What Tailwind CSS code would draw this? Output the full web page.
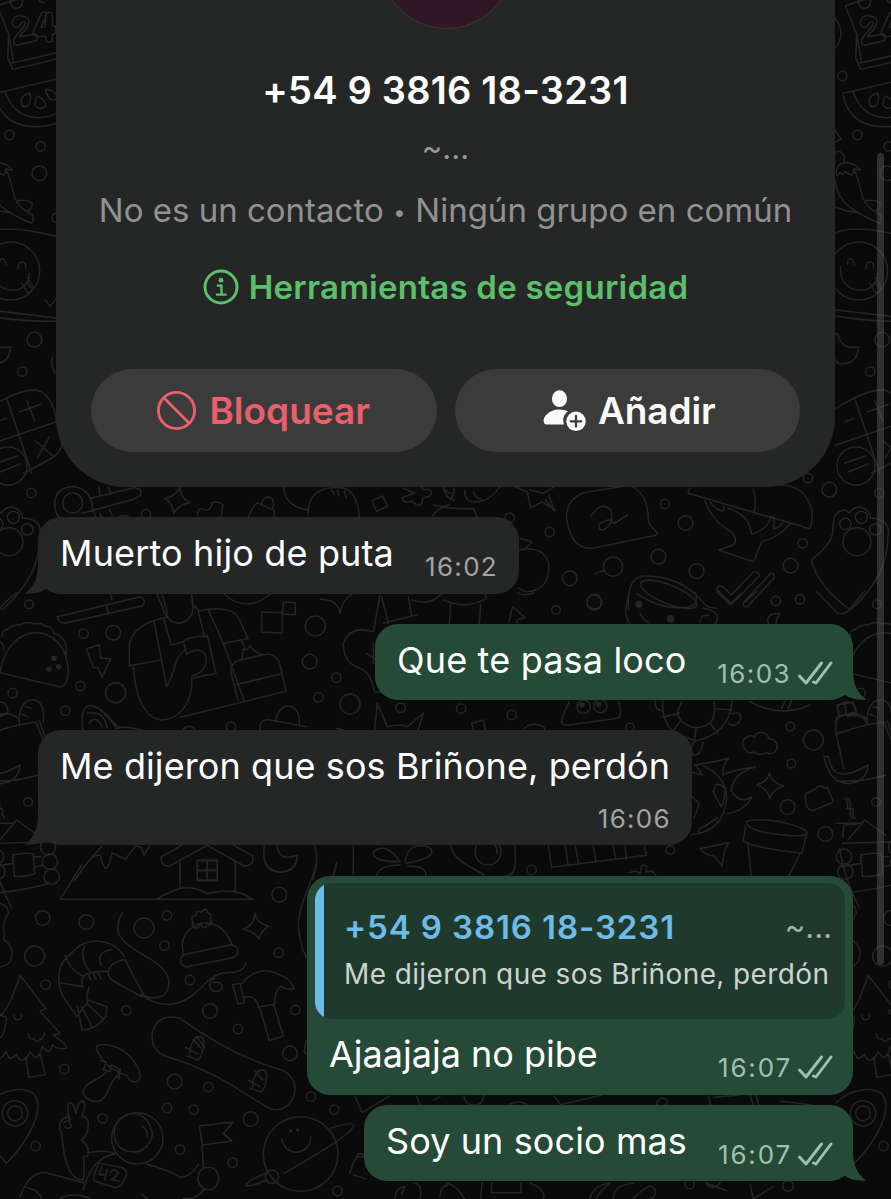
<!DOCTYPE html>
<html lang="es">
<head>
<meta charset="utf-8">
<title>Chat</title>
<script src="https://cdn.jsdelivr.net/npm/@tailwindcss/browser@4"></script>
</head>
<body class="bg-[#0a0a0a]">
<main class="relative flex h-[1199px] w-[891px] flex-col overflow-hidden bg-[#0a0a0a] font-['Inter','Liberation_Sans',sans-serif] text-white">

<!-- doodle wallpaper -->
<svg class="absolute inset-0 h-full w-full" viewBox="0 0 891 1199" fill="none" stroke="#252526" stroke-linecap="round" stroke-linejoin="round">
  <defs>
    <g id="tile" stroke-width="4.6">
      <g transform="scale(.33333)">
        <path d="M-8 18l34 85-3 70 15 35q150-30 220-65M33 190l150-35M26 103l15 84M-8 18q60-25 130-30M30 0q3 25 20 25t18-25M115-5q5 15 18 12"/>
        <path d="M36 70q5-28 32-22 32 8 10 38l-20 24 50-8q10 10 0 20l-58 14q-14-4-8-20l34-42q0-12-8-8l-12 14q-16 6-20-10zM125 38q18-8 12 14l-14 30 12-2 2-38q14-10 20 0v34l10 4v20l-10 4v18q-12 10-20 0v-14l-30 2q-10-6-6-18z"/>
        <path d="M-15 280L175 236M-15 285q20 95 125 95 40 0 70-15M15 275q25 75 100 78 30 0 60-15M62 305q5-25 28-25 5 20-6 38-18 8-22-13zM112 288q24 10 26 30-16 14-32 0-4-16 6-30zM138 268q20 0 34 20-2 15-20 10-14-12-14-30z"/>
        <circle cx="29" cy="405" r="14"/><circle cx="-17" cy="228" r="14"/><circle cx="122" cy="439" r="14"/><circle cx="118" cy="520" r="22"/><circle cx="170" cy="653" r="14"/>
        <path d="M-35 520q0-28 24-32 30-2 48 22l-20-3q0 18-8 18-12-6-20-10-4 14-12 2-12 18-12 3zM18 510c30 50 5 100 80 135q5 15-3 25c-120-50-130-90-135-135M55 602q30-5 42 10-2 18-18 22M-40 620q50 20 70 15M-40 485q-4-40 16-30 20 14 10 32M-39 700q45-30 207 8"/>
        <circle cx="32" cy="813" r="87"/><path d="M-22 800c-10 85 110 95 110 20M-2 792q2-16 10-16t10 18M54 806q0-20 12-20t11 18M65 850l18 28q18 0 12-25l-13-20M82 846l8 16M136 900l14 20 18-24M-39 930q80 8 207 24"/>
      </g>
      <g transform="translate(0,320) scale(.33333)">
        <path d="M-36-12Q60 5 168 4"/><circle cx="103" cy="59" r="22"/><circle cx="67" cy="155" r="14"/>
        <path d="M-30 42q10 50 62 38-4 52-50 52-38 0-22-90zM158 112q-8 25 8 48M-36 265Q60 205 110 210q50 15 60 95l15 45q10 45-40 70-50 28-75 40M-36 375L170 305M20 235L95 460M60 275l62-22M80 240l24 62M105 362l54 46M112 412l36-60M-10 305l30-10"/>
        <circle cx="24" cy="438" r="57"/><path d="M-10 430l62-22M0 456l60-24"/><circle cx="94" cy="519" r="14"/>
        <circle cx="27" cy="665" r="42"/><circle cx="40" cy="592" r="18"/><circle cx="-8" cy="612" r="17"/><circle cx="82" cy="628" r="17"/>
        <path d="M-45 630c-5-60 40-70 48-50 20-30 60-20 65 15 40 0 58 20 52 50 0 80-30 150-113 225Q-90 800-110 720q65-50 65-90z"/>
        <circle cx="87" cy="853" r="13"/>
      </g>
      <g transform="translate(0,590) scale(.33333)">
        <path d="M0 250c20-160 195-160 205-12q0 50-25 52L-35 240M8 140q-5-20 15-22 20-16 40-14 20-12 40-2 20-6 30 6 25 0 28 22 48 14 36 75M0 155q14 10 10 24"/>
        <g fill="#252526"><circle cx="162" cy="205" r="6"/><circle cx="147" cy="237" r="6"/><circle cx="176" cy="230" r="6"/></g>
        <circle cx="38" cy="309" r="14"/><circle cx="84" cy="636" r="13"/>
        <path d="M-32 350q20-20 42-12 14 8 14 32l-50 8zM-10 340l4 30M-34 380l-3 45 24 110M-36 432q90-30 144-36L135 465M118 393l22 60M0 380q25-20 58 8v16M58 380q8-60 52-48 25 10 20 65M75 350l18 4M66 372l16 8M-36 572q60 8 148-16M-58 500q10 90 118 25-4 50-56 56-60 0-76-82zM-10 625q12 8 8 30 14 0 8 16l8 14M-36 700l72 0M0 750L50 690l62 45M-18 760l170-5"/>
        <path d="M38 795q30-8 62-4l4 60q-30 10-60 8zM-20 830l60-10M100 800h22M104 830l24-4M-25 775q10 80 60 180"/>
        <circle cx="-12" cy="800" r="23"/><circle cx="-8" cy="845" r="23"/><circle cx="144" cy="772" r="23"/><circle cx="150" cy="815" r="23"/><circle cx="155" cy="860" r="23"/>
      </g>
      <g transform="translate(0,860) scale(.33333)">
        <path d="M-40 100q100-4 190-30M0 130q30 10 24 30-12 18-14 44 5 20 0 34 30 20 26 50-4 28-36 34"/><circle cx="128" cy="174" r="22"/><circle cx="104" cy="288" r="30"/>
        <path d="M60 346L138 446l-18 8 60 66-20 6q40 26 40 38-30 6-42-10-4 22-16 20l-16-14q-6 30-20 34l-16-18q-10 24-24 24-12 0-16-18-8 12-22 12l-10-20q-14 28-30 20l5-30q-14-8-10-24l22-10q12-18 14-58l-18-6q20-8 60-120zM42 465q0 16 12 14t10-18M84 520q4 22 18 16 4 14 16 4 12-2 16-20M78 592l8 60 50-8-15-60"/>
        <circle cx="137" cy="374" r="14"/><circle cx="45" cy="760" r="38"/><circle cx="45" cy="760" r="22"/><circle cx="107" cy="858" r="14"/>
        <path d="M-36 730c30-35 100-55 135-30 40 40-10 140-80 210l-60-70M-36 845l30 70"/>
      </g>
    </g>
  </defs>
  <use href="#tile"/>
  <use href="#tile" x="848"/>
  <path d="M835 18q12 16 0 30M835 130l6 9-6 3" stroke-width="1.5"/>

  <!-- between the contact card and the first messages -->
  <g transform="translate(0,320) scale(.33333)" stroke-width="4.6">
    <circle cx="218" cy="549" r="30"/><path d="M165 560c-10-75 105-85 112 0l10 30M165 560q5 50 60 48M272 535l130-32q30 4 18 24-10 8-30 14L245 580M296 500l4 25M325 500l8 22M300 580l4 12M330 570l8 22M355 590q20-6 30 0"/>
    <circle cx="438" cy="582" r="14"/><path d="M540 503q0 30 30 45-35 5-48 32-5-35-30-44 34-6 48-33zM592 585q2-24 18-16 24 6 26-20 16-8 32 4l-4 38M745 590q10-24 26-42l52 24v20M786 550q4-22 24-18 16 10 8 34M850 500q4 60 75 70M925 585c-5-80 60-85 100-82q50 10 52 90M994 510l8 12M1012 510l6 18M1032 512l6 20M1116 542l30-14 18 30-34 16zM1210 505l34 14-38 14q4 20 30 10l14 12q20 4 18-22l22-4q14-24-20-20l-10-12M1296 590q20-30 54-36M1330 500q8 20 24 20"/>
  </g>
  <g transform="translate(440,320) scale(.33333)" stroke-width="4.6">
    <path d="M-20 555q80 16 120 10l14 30M12 505q4 30 30 36M42 505q0 20-8 30M75 510q-4 50 60 30 24-10 44-40M100 516q8 20 24 20M228 502l34 14 10 48 34-18 40 24M316 540l28 32-18-46M270 510l40 10 30-18"/>
    <circle cx="209" cy="593" r="14"/><circle cx="329" cy="636" r="14"/><path d="M380 600q-5-60 50-82l140-22q55 25 55 105 5 20 27 36 0 12-20 12l-170 35q-65 10-82-84zM453 588q30-45 58-20 16 40-20 62-16 2-14-16 14-14 34-14l12 10 40-25"/>
    <circle cx="675" cy="552" r="14"/><circle cx="737" cy="609" r="22"/><circle cx="655" cy="710" r="22"/><circle cx="770" cy="753" r="22"/><circle cx="519" cy="740" r="29"/><path d="M490 752l-28 10"/><circle cx="389" cy="775" r="22"/><circle cx="463" cy="845" r="22"/>
    <path d="M750 505l-6 15 366 106q20-60-20-105-30-30-80-25M940 508q10 30 2 75M795 542q20 60 80 95 20 20 5 38l-44 16 105 34q20-50 24-60 60-16 85-55M810 546q20 28 42 26v-14M864 565q65 20 70 78 50-15 60-55M1000 590q4 20 0 38 28-10 30-28"/>
    <circle cx="1088" cy="670" r="14"/><circle cx="1052" cy="737" r="22"/><circle cx="1104" cy="474" r="14"/><circle cx="1168" cy="509" r="22"/><circle cx="1007" cy="843" r="14"/><circle cx="1080" cy="838" r="14"/>
    <path d="M240 655l36 10-24 25M236 690q75-15 90 40 4 85-70 85-14-8-20-10M830 808q4-16 18-8l26 24 66-68q16-4 18 12l-82 84zM910 848l82-88q14 0 10 14l-80 86q-14 4-12-12zM566 870q-8-90 40-102 110-5 180 75 10 20 44 22"/>
    <ellipse cx="686" cy="823" rx="90" ry="28" transform="rotate(22 686 823)"/><circle cx="597" cy="853" r="8" fill="#252526"/>
  </g>

  <!-- middle band -->
  <g transform="translate(0,590) scale(.33333)" stroke-width="4.6">
    <path d="M-5 60Q20 30 50 8M172 80l250-60q20 12 4 28L200 98q-26 4-28-18zM330 10l6 20M318 46l8 24M470 10l28 68M486 10l12 45"/>
    <circle cx="251" cy="131" r="14"/><circle cx="340" cy="128" r="22"/><circle cx="241" cy="288" r="14"/><circle cx="347" cy="308" r="30"/><circle cx="196" cy="362" r="14"/>
    <path d="M260 176l38-12 4 40 30 2-26 56-12-30-14 2zM500 82q-100 20-112 80v65l92-16M400 230c5 90 35 160 90 160 60-5 90-70 85-125l68-14M462 95l38 195c30-50 20-85 55-110M490 85l24 80 36-10q10-14 72-18l26 112M552 160l8 32q40-25 58 5 5 50-42 60M594 62l20 78M625 60l45 100 62 170M600 62q100-20 120 30l24 54-76 14M540 382l318-78-18-80q-10-38-50-30l-70 16q-38 12-24 50l18 70M708 284l134-32M726 204l4-28q10 10 20-10 8 20 38 28M724 152l10 20M500 60c-5 60 90 50 78-20l-4-30M576 40l20 22"/>
    <path d="M785 66l62 2v62l-62-4zM850 36l36 2v36l-38-2z"/><circle cx="946" cy="108" r="30"/><circle cx="929" cy="215" r="22"/><circle cx="1009" cy="263" r="14"/><circle cx="955" cy="322" r="14"/><circle cx="1050" cy="342" r="30"/><circle cx="1202" cy="353" r="14"/>
    <path d="M672 12q65 60 140 0M960 28q55 0 60 42 5-40 40-60M1140 15l-20 110q-70-20-90 35 0 60 50 75 30 10 44 70l22 2M1145 20l20 80M1225 20l10 60M1150 100l100-25M1235 30q60 20 90-20M1100 190l30 20M1120 160v60"/>
    <path d="M248 420q-10-80 30-72 40 10 70 68 30-10 76 4M262 370q50-10 60 44M268 400q20-30 40 14M300 360l60 55M550 418q16-18 34 0M780 420q-2-36 30-30l110 20M828 392c5-60 75-60 70 10M1124 418l8-78 30 70q40-8 60 0l48-40-16 50M1010 415l20 5"/><circle cx="693" cy="410" r="14"/>
    <path d="M225 870q40-60 80-100M275 802l25-8q10 40 18 42 10-5 18-48l40 20 30-40 18 4 8 24 16-28M484 800q20-10 60-34M484 800q-4 30 24 28l114-62 110 62q34-2 26-30l-60-34M540 815v55M706 815v55M592 812h60v58h-60zM622 812v58M592 842h60M793 768q-10 78 50 78 50-6 48-50-56 20-60-32M945 768q12 50-8 102M1060 768v70M1010 818q-4 30-16 52"/>
    <path d="M1200 815q-40-60-80-30-5 30 78 30M1215 815q10-60 70-45 40 30-68 50M1200 825q-60 0-70 30M1222 828q60 0 55 28"/>
  </g>
  <g transform="translate(440,590) scale(.33333)" stroke-width="4.6">
    <path d="M10 30q70 30 130-5l-6-14M32 42l-4 60M122 42l-4 60M206 98l12-48 38 34-22 4-4 10M232 8q20 12 50 0M568 10q-20 60 0 90M590 10q70 50 150 42 40-6 25-45M790 55q60 10 35 50M830 5l40 38 30-30M910 40l40-36M985 100q-10-30 36-30-14 16-12 30M1130 5l60 62q20 10 34-4l50-60M600 70q10 20 26 28M780 96l6-18 20-2"/>
    <circle cx="463" cy="38" r="22"/><circle cx="348" cy="60" r="13"/><circle cx="1008" cy="33" r="14"/><circle cx="1080" cy="28" r="14"/><circle cx="692" cy="86" r="9" fill="#252526"/><circle cx="597" cy="42" r="8" fill="#252526"/>
    <circle cx="63" cy="356" r="14"/><circle cx="215" cy="375" r="14"/><circle cx="570" cy="412" r="12"/><path d="M95 400l35-10 6 28M95 402l4 16M250 418q20-20 44-14 20 4 20 14M388 335q-20 40-24 60 4 12 20 10l150-20q14-8 2-50"/><circle cx="431" cy="350" r="20"/><circle cx="481" cy="348" r="20"/>
    <g fill="#252526"><circle cx="426" cy="345" r="6"/><circle cx="476" cy="343" r="6"/></g>
    <path d="M668 332q-2 70 40 100l60 20q100-20 108-120M722 390q-18-20 4-55M722 390q40 40 86 10 22-20 14-64M668 382l50-12M720 395l-26 34M768 412l-4 40M810 398l24 34M822 356l54 4M645 332q-2 30 24 30M876 372q28-12 26 18-16 24-36 12M764 454q-20 20-4 40 24 6 28-38M930 335q90 50 180 10M1025 355l10-22M1045 355l10-24"/>
    <path d="M920 484q-24-24-2-42 20-10 26 0 6-20 26-14 16 4 16 18 24 0 26 24-6 28-32 18-24 12-36-2-14 6-24-2z"/><circle cx="1051" cy="410" r="13"/><circle cx="1120" cy="450" r="30"/><circle cx="1054" cy="521" r="13"/>
    <path d="M1192 345l48-8 8 30-52 10zM1186 400q10-30 40-24 50 0 54 25"/>
    <path d="M762 525q50-6 104-20-20 20-18 50 40-18 98-24-70 20-72 72 24 40 62 18-22 42-74 50M790 528q70 30 70 100-12 100-108 106M752 545l36 10-20-28M756 620l22 20-16 45M820 605l8-22q20 0 28 16-4 40-12 52zM776 728q0-14 20-20l35-24"/>
    <path d="M988 548q6 30 42 40-34 10-40 38-6-30-40-42 34-8 38-36zM1098 610l30-14 4-6 16-2 4 8 10-4 18 44-56 24q-20 6-26-20-6-20 0-30zM1222 625q14 10 8 30 14 0 8 16l8 14"/><circle cx="1043" cy="651" r="22"/><circle cx="1156" cy="732" r="22"/><circle cx="691" cy="780" r="13"/><circle cx="275" cy="840" r="14"/>
    <path d="M920 695q20-12 100 0 70 16 80 30 5 20-90 8-90-12-90-38zM916 710l-6 42q20 20 176 38l14-60M924 762l10 100M1080 792l-40 78M1208 742l4-36 40-4M780 776l86-18q-14 20-20 70-14-20-24-30-22 0-42-22zM325 768l10 64 284-36-6-28M376 768l8 56M406 768l10 52M460 768l8 48M520 768l8 40M555 768l4 40"/>
    <path d="M32 768c10 50 80 70 100 88M225 768c0 40 10 90-30 90"/><circle cx="144" cy="786" r="39"/><path d="M165 765q8 10 6 24M570 848q20-10 30 4l4-24q10-8 16 4l-2 14q20-8 28 8"/>
  </g>

  <!-- lower left -->
  <g transform="translate(0,860) scale(.33333)" stroke-width="4.6">
    <path d="M245 15l-65 103h578q-40-30-95-24-30 4-40 8-60-35-115-4-20 6-34 18M540 15v66M706 15v78M592 0h60v62h-60zM622 0v62M592 30h60"/>
    <circle cx="259" cy="186" r="22"/><circle cx="432" cy="204" r="30"/><circle cx="501" cy="166" r="14"/><circle cx="493" cy="257" r="14"/><circle cx="570" cy="360" r="14"/><circle cx="379" cy="451" r="14"/><circle cx="630" cy="453" r="22"/><circle cx="714" cy="507" r="14"/><circle cx="838" cy="104" r="22"/><circle cx="836" cy="278" r="14"/><circle cx="886" cy="450" r="14"/><circle cx="870" cy="580" r="22"/><circle cx="193" cy="627" r="14"/><circle cx="524" cy="665" r="22"/><circle cx="625" cy="681" r="14"/><circle cx="501" cy="744" r="14"/><circle cx="581" cy="749" r="14"/><circle cx="752" cy="777" r="22"/><circle cx="933" cy="710" r="14"/><circle cx="1003" cy="749" r="14"/><circle cx="308" cy="775" r="14"/><circle cx="540" cy="869" r="14"/><circle cx="698" cy="908" r="14"/><circle cx="1013" cy="993" r="14"/>
    <path d="M367 157c-35 60 0 90 50 120 55 30 100 60 88 105-10 40-50 35-82 22M425 405c60 45 120 30 160-5 30-25 50-60 95-62 30 0 48-2 58-30M645 355q-25 10-10 35 24 12 32-8-4-20-28-14"/>
    <path d="M424 410L335 360q-20-20 0-45 20-15 40-16L430 404M374 290c-40-60-120-60-160-10-45 30-45 90-25 130l42 60 32-44q-6-14 4-44M246 375q-4-30 24-36 24-8 54-4M250 380L180 368M250 350q-46-26-54-64M272 338q-36-44-18-80M305 318q-20-40 30-50M232 438l14 72q40 0 72-40l2-30-56-20M244 440l34 64M262 432l46 44M265 342l8 18M280 340l8 18M295 340l8 16"/>
    <path d="M552 285q-20-60 40-92 70-20 104 60M542 300q-2-14 20-18l130-28q20 2 22 20 0 16-20 20l-135 27q-18-4-17-21zM592 205q-22-4-12-18-12-18 8-20 0-20 16-10 16-20 18 2 18 2 8 18 10 20-8 18-10 18-20-2z"/>
    <path d="M765 160q4 30 42 38-26 14-30 40-14-24-48-30 34-10 36-48zM698 374l22-4 14 58-20 4zM724 372q50-60 110-30 40 14 48 44-24 6-40-8-20 20-18 54l-48 10q-10-40-42-30M780 444l28 98 42-14-28-92"/>
    <path d="M540 475Q700 590 845 630c70 30 40 130-30 118-80-40-150-110-320-160-70-30-40-140 45-113zM570 580q0-30 18-48 22-8 24 14-4 44-18 54l-32-12M556 562l36 20M580 538l22 26M590 530l24 32M758 680q0-30 18-48 22-8 24 14-4 44-18 50l-32-12M744 660l36 20M766 634l22 26"/>
    <path d="M290 570c-10-30 60-15 90 10 50 50 45 80 30 85q-20 4-28-18Q320 630 290 570zM300 602l18 4-8 24 20 4 5-20 20 12 2 30 4-30M322 632c-20 30-60 30-70 55-10 20 20 45 50 35 30-20 20-50 50-75"/>
    <path d="M185 820c-20-40 20-60 25-40-20-60 10-70 18-20 10-60 40-40 18 10 30 0 20 50 0 70M185 820c5 60 15 140 65 140 10-60-10-80 12-70q10-30-18-50M190 790q20-20 24 10-10 10-20 0M265 878q60-10 80 4-70 10-95 108M60 1010q30-80 80-72l110 30M80 982q40 10 44 35"/>
    <circle cx="412" cy="835" r="77"/><path d="M345 800c30-60 100-50 112 20 0 30-30 60-60 55-40 0-60-30-52-75zM424 798q20 10 18 34"/><path d="M296 910l66 12q20 4 18 24l-12 22q-8 16-26 14l-50-16q-16-4-10-20zM306 920l-8 24h20M322 926l-8 34M332 936q10-12 22 0 0 14-20 22l24 6"/>
    <path d="M440 912q70 20 100 40 30 0 55-38M606 850L598 797l100-10-28 34 26 22-90 12M606 850l4 70M594 960q0-40 34-38 24 0 28 34-2 28-26 34-28 0-36-30zM610 990q-20 30-60 25M425 1003l20 15M180 1015q40-20 90 0"/>
    <circle cx="902" cy="882" r="112"/><circle cx="816" cy="950" r="20"/><path d="M992 805q60-20 70-10-5 30-210 145M800 940q-60 20-62 38 24 0 62-18M846 836c5 55 85 55 86-6"/><circle cx="872" cy="814" r="3"/><circle cx="893" cy="810" r="3"/>
    <path d="M950 5c-10 60-45 100-55 180q0 60 25 110M1010 8l-8 30M1060 5v38M795 8c20 40 90 40 95-10M1065 710l22 48 80-50M1050 940q15-55 30-50l36 5M1060 945l40 12M1070 895q0-20 20-10M1185 1015q0-30 30-36l-10 24M1240 970q30 0 20 45M1320 1010q0-30 24-36M1250 710l10 25M1300 720l20-10M920 540l-8 36 10 8"/>
  </g>
  <g transform="translate(440,860) scale(.33333)" stroke-width="4.6">
    <path d="M72 706c0 40 60 40 58 0M210 732q24-12 50 0M342 708l20 26 120-28M650 735q2-20 20-20t8 20M805 708l6 26M820 712l80-6M930 706l10 28M948 706l8 28M1022 724l90 10M20 968q30 8 54 49M126 968l-4 49M155 968v30h88v-30M270 968q50 20 40 49M450 1015q10-40 60-45-30 20-40 45M520 1015q0-40 60-45M580 1015q60-60 66-20 0 20-20 22M800 970l60 22M930 972l10 44M1000 980q-50 30-60 36"/>
    <circle cx="749" cy="972" r="14"/><circle cx="819" cy="960" r="22"/><circle cx="1044" cy="978" r="16"/>
  </g>
</svg>

<!-- scroll indicator -->
<div class="absolute left-[877px] top-[153px] h-[812px] w-[7px] rounded-full bg-[#6a6a6a]/40"></div>

<!-- contact card -->
<section class="relative ml-[56px] h-[487px] w-[779px] shrink-0 rounded-b-[70px] bg-[#252726] px-[35px]">
  <div class="absolute left-[324px] top-[-104px] size-[133px] rounded-full border border-[#44303b] bg-[#2f1826]"></div>
  <div class="flex flex-col items-center pt-[66px]">
    <h1 class="h-[48px] whitespace-nowrap text-[38px] leading-[48px] font-semibold tracking-[0.22px]">+54 9 3816 18-3231</h1>
    <p class="mt-[14px] h-[40px] whitespace-nowrap text-[31px] leading-[40px] text-[#989898]">~...</p>
    <p class="mt-[22px] h-[40px] whitespace-nowrap text-[33px] leading-[40px] text-[#919191]">No es un contacto <span class="inline-block w-[13px] text-center align-[2px] text-[22px] leading-none">•</span> Ningún grupo en común</p>
    <div class="mt-[37px] flex h-[40px] items-center gap-[10px] text-[#5cbf6a]">
      <svg class="size-[36px]" viewBox="0 0 36 36" fill="none" stroke="currentColor" stroke-width="3"><circle cx="18" cy="18" r="16"/><circle cx="18" cy="11.2" r="2.4" fill="currentColor" stroke="none"/><path d="M14.8 16.6h3.7v8.6M14 25.6h8.6" stroke-width="2.4" stroke-linecap="round"/></svg>
      <span class="whitespace-nowrap text-[33px] leading-[40px] font-semibold tracking-[0.24px]">Herramientas de seguridad</span>
    </div>
  </div>
  <div class="mt-[62px] grid grid-cols-2 gap-[18px]">
    <button class="flex h-[83px] items-center justify-center gap-[13px] rounded-full bg-[#3b3b3b] text-[#e95f6a]">
      <svg class="size-[39px]" viewBox="0 0 38 38" fill="none" stroke="currentColor" stroke-width="2.8"><circle cx="19" cy="19" r="17.6"/><path d="M6.6 6.6l24.8 24.8"/></svg>
      <span class="whitespace-nowrap text-[37px] leading-[48px] font-semibold">Bloquear</span>
    </button>
    <button class="flex h-[83px] items-center justify-center gap-[12px] rounded-full bg-[#3b3b3b] pl-[4px] text-[#fafafa]">
      <svg class="h-[42px] w-[43px]" viewBox="0 0 43 42" fill="currentColor"><ellipse cx="16.5" cy="8.700" rx="7.6" ry="8.4"/><path d="M.8 31.500c-1.500-2.500 3.500-12 15.700-12 3.500 0 6 .7 8.300 1.800A12 12 0 0 0 21 34.500H3.500C2 34.500 .8 33.500 .8 31.500z"/><circle cx="33" cy="31.300" r="9.700"/><path d="M33 26v10.600M27.700 31.300h10.600" stroke="#3b3b3b" stroke-width="2.300" stroke-linecap="round"/></svg>
      <span class="whitespace-nowrap text-[37px] leading-[48px] font-semibold tracking-[-0.1px]">Añadir</span>
    </button>
  </div>
</section>

<!-- messages -->
<section class="relative flex flex-col pl-[38px] pr-[38px] pt-[30px]">
  <article class="relative flex h-[77px] w-[481px] justify-between rounded-[23px] bg-[#252726] pl-[22px] pr-[21px]">
    <svg class="absolute bottom-0 left-[-13px] h-[30px] w-[40px]" viewBox="0 0 40 30" fill="#252726"><path d="M13 0C13 12 10 22 0 29.500 9 30.500 17 28 21.700 24.500 27 28 32 30 40 30V0Z"/></svg>
    <p class="relative mt-[14px] whitespace-nowrap text-[36px] leading-[44px] tracking-[0.15px]">Muerto hijo de puta</p>
    <time class="relative mt-[34px] whitespace-nowrap text-[26px] leading-[32px] tracking-[1.3px] text-[#a2a3a2]">16:02</time>
  </article>

  <article class="relative mt-[30px] flex h-[76px] w-[478px] justify-between self-end rounded-[23px] bg-[#264a38] pl-[22px] pr-[20px]">
    <svg class="absolute bottom-0 right-[-13px] h-[30px] w-[40px]" viewBox="0 0 40 30" fill="#264a38"><path d="M27 0C27 12 30 22 40 29.500 31 30.500 23 28 18.300 24.500 13 28 8 30 0 30V0Z"/></svg>
    <p class="relative mt-[14px] whitespace-nowrap text-[36px] leading-[44px] tracking-[0.17px]">Que te pasa loco</p>
    <div class="relative mt-[34px] flex h-[32px] gap-[7px] text-[#a3bfae]">
      <time class="whitespace-nowrap text-[26px] leading-[32px] tracking-[1.4px]">16:03</time>
      <svg class="mt-[2px] h-[26px] w-[35px]" viewBox="0 0 35 26" fill="none" stroke="currentColor" stroke-width="2.900" stroke-linecap="round" stroke-linejoin="round"><path d="M1.500 16l6.500 7L23.500 3M15.500 22l2.500 1L33 3"/></svg>
    </div>
  </article>

  <article class="relative mt-[30px] flex h-[115px] w-[654px] flex-col rounded-[23px] bg-[#252726] pl-[22px] pr-[21px]">
    <svg class="absolute bottom-0 left-[-13px] h-[30px] w-[40px]" viewBox="0 0 40 30" fill="#252726"><path d="M13 0C13 12 10 22 0 29.500 9 30.500 17 28 21.700 24.500 27 28 32 30 40 30V0Z"/></svg>
    <p class="relative mt-[14px] whitespace-nowrap text-[36px] leading-[44px] tracking-[0.09px]">Me dijeron que sos Briñone, perdón</p>
    <time class="relative mt-[15px] self-end whitespace-nowrap text-[26px] leading-[32px] tracking-[1.3px] text-[#a2a3a2]">16:06</time>
  </article>

  <article class="mt-[31px] flex h-[219px] w-[546px] flex-col self-end rounded-[23px] bg-[#264a38] px-[8px] pt-[7px]">
    <blockquote class="flex h-[136px] overflow-hidden rounded-[17px] bg-[#1f3a2d]">
      <div class="w-[9px] shrink-0 bg-[#6fbbe8]"></div>
      <div class="flex grow flex-col pl-[20px] pr-[13px] pt-[24px]">
        <div class="flex h-[40px] justify-between">
          <cite class="whitespace-nowrap text-[33px] leading-[40px] font-semibold not-italic tracking-[0.9px] text-[#6fbbe8]">+54 9 3816 18-3231</cite>
          <span class="whitespace-nowrap text-[31px] leading-[40px] text-[#a5b1aa]">~...</span>
        </div>
        <p class="mt-[9px] whitespace-nowrap text-[28px] leading-[36px] tracking-[0.39px] text-[#cdd3d0]">Me dijeron que sos Briñone, perdón</p>
      </div>
    </blockquote>
    <div class="flex justify-between pl-[14px] pr-[12px]">
      <p class="mt-[13px] whitespace-nowrap text-[36px] leading-[44px]">Ajaajaja no pibe</p>
      <div class="mt-[33px] flex h-[32px] gap-[6px] text-[#a3bfae]">
        <time class="whitespace-nowrap text-[26px] leading-[32px] tracking-[1.85px]">16:07</time>
        <svg class="mt-[2px] h-[26px] w-[35px]" viewBox="0 0 35 26" fill="none" stroke="currentColor" stroke-width="2.900" stroke-linecap="round" stroke-linejoin="round"><path d="M1.500 16l6.500 7L23.500 3M15.500 22l2.500 1L33 3"/></svg>
      </div>
    </div>
  </article>

  <article class="relative mt-[10px] flex h-[76px] w-[489px] justify-between self-end rounded-[23px] bg-[#264a38] pl-[22px] pr-[20px]">
    <svg class="absolute bottom-0 right-[-13px] h-[30px] w-[40px]" viewBox="0 0 40 30" fill="#264a38"><path d="M27 0C27 12 30 22 40 29.500 31 30.500 23 28 18.300 24.500 13 28 8 30 0 30V0Z"/></svg>
    <p class="relative mt-[14px] whitespace-nowrap text-[36px] leading-[44px] tracking-[0.1px]">Soy un socio mas</p>
    <div class="relative mt-[34px] flex h-[32px] gap-[6px] text-[#a3bfae]">
      <time class="whitespace-nowrap text-[26px] leading-[32px] tracking-[1.85px]">16:07</time>
      <svg class="mt-[2px] h-[26px] w-[35px]" viewBox="0 0 35 26" fill="none" stroke="currentColor" stroke-width="2.900" stroke-linecap="round" stroke-linejoin="round"><path d="M1.500 16l6.500 7L23.500 3M15.500 22l2.500 1L33 3"/></svg>
    </div>
  </article>
</section>
</main>
</body>
</html>
